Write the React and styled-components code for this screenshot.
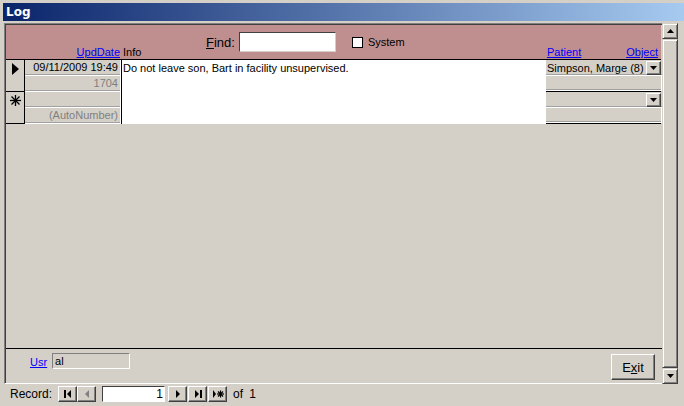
import styled, { createGlobalStyle } from "styled-components";

const Global = createGlobalStyle`
  html, body { margin: 0; padding: 0; background: #d4d0c8; }
  body { font-family: "Liberation Sans", Arial, sans-serif; font-size: 11px; color: #000; }
`;

const Win = styled.div`
  width: 684px;
  height: 406px;
  box-sizing: border-box;
  padding: 3px 0 0 3px;
  background: #d4d0c8;
  display: flex;
  flex-direction: column;
  overflow: hidden;
`;
const TitleBar = styled.div`
  height: 18px;
  flex-shrink: 0;
  background: linear-gradient(to right, #0a246a, #a6caf0);
  color: #fff;
  font-family: "DejaVu Sans", sans-serif;
  font-weight: bold;
  font-size: 12px;
  display: flex;
  align-items: center;
  padding-left: 3px;
`;
const Client = styled.div`
  display: flex;
  margin-top: 2px;
  height: 361px;
  flex-shrink: 0;
  padding-left: 1px;
`;
const Form = styled.div`
  width: 656px;
  border-top: 1px solid #808080;
  border-left: 1px solid #808080;
  border-bottom: 1px solid #fff;
  box-shadow: inset 1px 1px 0 #404040;
  padding: 1px 0 0 1px;
  display: flex;
  flex-direction: column;
  background: #d4d0c8;
`;
const Header = styled.div`
  height: 34px;
  flex-shrink: 0;
  background: #bf8f8f;
  border-bottom: 1px solid #000;
  margin-right: 1px;
`;
const FindRow = styled.div`
  display: flex;
  align-items: center;
  height: 20px;
  padding: 7px 0 0 200px;
`;
const FindLabel = styled.span`
  font-size: 13px;
  margin-right: 4px;
  u { text-decoration: underline; }
`;
const FindInput = styled.div`
  width: 95px;
  height: 18px;
  background: #fff;
  border-top: 1px solid #404040;
  border-left: 1px solid #404040;
  border-right: 1px solid #d4d0c8;
  border-bottom: 1px solid #d4d0c8;
`;
const Check = styled.div`
  width: 9px;
  height: 9px;
  border: 1px solid #000;
  background: #fff;
  margin: 0 5px 0 16px;
`;
const LabelsRow = styled.div`
  display: grid;
  grid-template-columns: 19px 97px 424px 116px;
  line-height: 13px;
  margin-top: -6px;
`;
const ColLabel = styled.span`
  padding: ${(p) => (p.right ? "0 2px 0 0" : p.split ? "0 4px 0 1px" : "0 0 0 1px")};
  display: flex;
  justify-content: ${(p) => (p.split ? "space-between" : p.right ? "flex-end" : "flex-start")};
  a { color: #0000ff; text-decoration: underline; }
`;
const Row = styled.div`
  display: grid;
  grid-template-columns: 19px 97px 424px 116px;
  height: 31px;
  flex-shrink: 0;
  border-bottom: 1px solid #000;
  margin-right: 1px;
`;
const Selector = styled.div`
  border-right: 1px solid #000;
  display: flex;
  justify-content: center;
  padding: 3px 0 0 1px;
  box-sizing: border-box;
`;
const Stack = styled.div`
  display: flex;
  flex-direction: column;
  border-right: 1px solid #000;
`;
const Cell = styled.div`
  height: 15px;
  flex-shrink: 0;
  border-bottom: 1px solid #fff;
  border-right: 1px solid #fff;
  box-shadow: inset 0 -1px 0 #a0a0a0;
  text-align: right;
  padding-right: 2px;
  line-height: 15px;
  color: ${(p) => (p.dim ? "#808080" : "#000")};
  white-space: nowrap;
  overflow: hidden;
`;
const InfoCell = styled.div`
  background: #fff;
  padding: 2px 0 0 1px;
  line-height: 12px;
`;
const RightStack = styled.div`
  display: flex;
  flex-direction: column;
`;
const Combo = styled.div`
  height: 15px;
  flex-shrink: 0;
  display: flex;
  align-items: center;
  justify-content: space-between;
  border-bottom: 1px solid #fff;
  box-shadow: inset 0 -1px 0 #a0a0a0;
  padding-left: 1px;
`;
const DropBtn = styled.div`
  width: 15px;
  height: 14px;
  box-sizing: border-box;
  background: #d4d0c8;
  border-top: 1px solid #fff;
  border-left: 1px solid #fff;
  border-right: 1px solid #404040;
  border-bottom: 1px solid #404040;
  box-shadow: inset -1px -1px 0 #808080;
  display: flex;
  align-items: center;
  justify-content: center;
  margin-right: 1px;
`;
const Field = styled.div`
  height: 14px;
  border-bottom: 1px solid #fff;
  border-right: 1px solid #fff;
  box-shadow: inset 0 -1px 0 #a0a0a0;
`;
const Detail = styled.div`
  flex: 1;
`;
const Footer = styled.div`
  height: 35px;
  flex-shrink: 0;
  border-top: 1px solid #000;
  display: flex;
  align-items: flex-start;
  padding: 4px 7px 0 24px;
  box-sizing: border-box;
`;
const Link = styled.span`
  color: #0000ff;
  text-decoration: underline;
  margin-top: 3px;
  margin-right: 5px;
`;
const UsrBox = styled.div`
  width: 74px;
  height: 14px;
  border-top: 1px solid #808080;
  border-left: 1px solid #808080;
  border-right: 1px solid #fff;
  border-bottom: 1px solid #fff;
  padding-left: 2px;
  line-height: 14px;
`;
const Spacer = styled.div`
  flex: 1;
`;
const Button = styled.div`
  width: 44px;
  height: 26px;
  box-sizing: border-box;
  border-top: 1px solid #fff;
  border-left: 1px solid #fff;
  border-right: 1px solid #404040;
  border-bottom: 1px solid #404040;
  box-shadow: inset -1px -1px 0 #808080;
  display: flex;
  align-items: center;
  justify-content: center;
  font-size: 13px;
  margin-top: 1px;
  u { text-decoration: underline; }
`;
const Scroll = styled.div`
  width: 16px;
  display: flex;
  flex-direction: column;
  background: #e6e3de;
`;
const ScrollBtn = styled.div`
  width: 16px;
  height: 16px;
  flex-shrink: 0;
  box-sizing: border-box;
  background: #d4d0c8;
  border-top: 1px solid #d4d0c8;
  border-left: 1px solid #d4d0c8;
  border-right: 1px solid #404040;
  border-bottom: 1px solid #404040;
  box-shadow: inset 1px 1px 0 #fff, inset -1px -1px 0 #808080;
  display: flex;
  align-items: center;
  justify-content: center;
`;
const Thumb = styled(ScrollBtn)`
  height: auto;
  flex: 1;
`;
const NavBar = styled.div`
  height: 17px;
  flex-shrink: 0;
  margin-top: 1px;
  display: flex;
  align-items: center;
  padding-left: 7px;
`;
const NavLabel = styled.span`
  margin-right: 6px;
  font-size: 12px;
`;
const NavBtn = styled.div`
  width: 19px;
  height: 16px;
  box-sizing: border-box;
  border-top: 1px solid #fff;
  border-left: 1px solid #fff;
  border-right: 1px solid #404040;
  border-bottom: 1px solid #404040;
  box-shadow: inset -1px -1px 0 #808080;
  display: flex;
  align-items: center;
  justify-content: center;
  margin-left: ${(p) => p.gap || 0}px;
`;
const NavInput = styled.div`
  width: 60px;
  height: 14px;
  background: #fff;
  border-top: 1px solid #404040;
  border-left: 1px solid #404040;
  border-right: 1px solid #fff;
  border-bottom: 1px solid #fff;
  margin: 0 3px 0 6px;
  text-align: right;
  padding-right: 1px;
  line-height: 14px;
  font-size: 12px;
`;
const OfText = styled.span`
  margin-left: 6px;
  font-size: 12px;
  word-spacing: 3px;
`;

const Tri = ({ dir = "down", color = "#000" }) => {
  const pts = {
    down: "0,0 7,0 3.5,4",
    up: "0,4 7,4 3.5,0",
  }[dir];
  return (
    <svg width="7" height="4" viewBox="0 0 7 4">
      <polygon points={pts} fill={color} />
    </svg>
  );
};

const Glyph = ({ kind, color = "#000" }) => (
  <svg width="12" height="8" viewBox="0 0 12 8">
    {kind === "first" && (
      <g fill={color}>
        <rect x="2" y="0" width="2" height="8" />
        <polygon points="9,0 9,8 5,4" />
      </g>
    )}
    {kind === "prev" && <polygon points="8,0 8,8 4,4" fill={color} />}
    {kind === "next" && <polygon points="4,0 4,8 8,4" fill={color} />}
    {kind === "last" && (
      <g fill={color}>
        <polygon points="3,0 3,8 7,4" />
        <rect x="8" y="0" width="2" height="8" />
      </g>
    )}
    {kind === "new" && (
      <g fill={color} stroke={color}>
        <polygon points="1,0 1,8 4,4" stroke="none" />
        <g strokeWidth="1.2">
          <line x1="8.5" y1="0.5" x2="8.5" y2="7.5" />
          <line x1="5" y1="4" x2="12" y2="4" />
          <line x1="6" y1="1.5" x2="11" y2="6.5" />
          <line x1="11" y1="1.5" x2="6" y2="6.5" />
        </g>
      </g>
    )}
  </svg>
);

const Pointer = () => (
  <svg width="7" height="12" viewBox="0 0 7 12">
    <polygon points="0,0 7,6 0,12" fill="#000" />
  </svg>
);

const Star = () => (
  <svg width="11" height="11" viewBox="0 0 11 11" stroke="#000" strokeWidth="1.3">
    <line x1="5.5" y1="0" x2="5.5" y2="11" />
    <line x1="0" y1="5.5" x2="11" y2="5.5" />
    <line x1="1.5" y1="1.5" x2="9.5" y2="9.5" />
    <line x1="9.5" y1="1.5" x2="1.5" y2="9.5" />
  </svg>
);

export default function App() {
  return (
    <>
      <Global />
      <Win>
        <TitleBar>Log</TitleBar>
        <Client>
          <Form>
            <Header>
              <FindRow>
                <FindLabel>
                  <u>F</u>ind:
                </FindLabel>
                <FindInput />
                <Check />
                <span>System</span>
              </FindRow>
              <LabelsRow>
                <span />
                <ColLabel right>
                  <a>UpdDate</a>
                </ColLabel>
                <ColLabel>Info</ColLabel>
                <ColLabel split>
                  <a>Patient</a>
                  <a>Object</a>
                </ColLabel>
              </LabelsRow>
            </Header>
            <Row>
              <Selector>
                <Pointer />
              </Selector>
              <Stack>
                <Cell>09/11/2009 19:49</Cell>
                <Cell dim>1704</Cell>
              </Stack>
              <InfoCell>Do not leave son, Bart in facility unsupervised.</InfoCell>
              <RightStack>
                <Combo>
                  <span>Simpson, Marge (8)</span>
                  <DropBtn>
                    <Tri />
                  </DropBtn>
                </Combo>
                <Field />
              </RightStack>
            </Row>
            <Row>
              <Selector>
                <Star />
              </Selector>
              <Stack>
                <Cell />
                <Cell dim>(AutoNumber)</Cell>
              </Stack>
              <InfoCell />
              <RightStack>
                <Combo>
                  <span />
                  <DropBtn>
                    <Tri />
                  </DropBtn>
                </Combo>
                <Field />
              </RightStack>
            </Row>
            <Detail />
            <Footer>
              <Link>Usr</Link>
              <UsrBox>al</UsrBox>
              <Spacer />
              <Button>
                E<u>x</u>it
              </Button>
            </Footer>
          </Form>
          <Scroll>
            <ScrollBtn>
              <Tri dir="up" />
            </ScrollBtn>
            <Thumb />
            <ScrollBtn>
              <Tri />
            </ScrollBtn>
          </Scroll>
        </Client>
        <NavBar>
          <NavLabel>Record:</NavLabel>
          <NavBtn>
            <Glyph kind="first" />
          </NavBtn>
          <NavBtn>
            <Glyph kind="prev" color="#808080" />
          </NavBtn>
          <NavInput>1</NavInput>
          <NavBtn>
            <Glyph kind="next" />
          </NavBtn>
          <NavBtn gap={1}>
            <Glyph kind="last" />
          </NavBtn>
          <NavBtn gap={1}>
            <Glyph kind="new" />
          </NavBtn>
          <OfText>of 1</OfText>
        </NavBar>
      </Win>
    </>
  );
}
